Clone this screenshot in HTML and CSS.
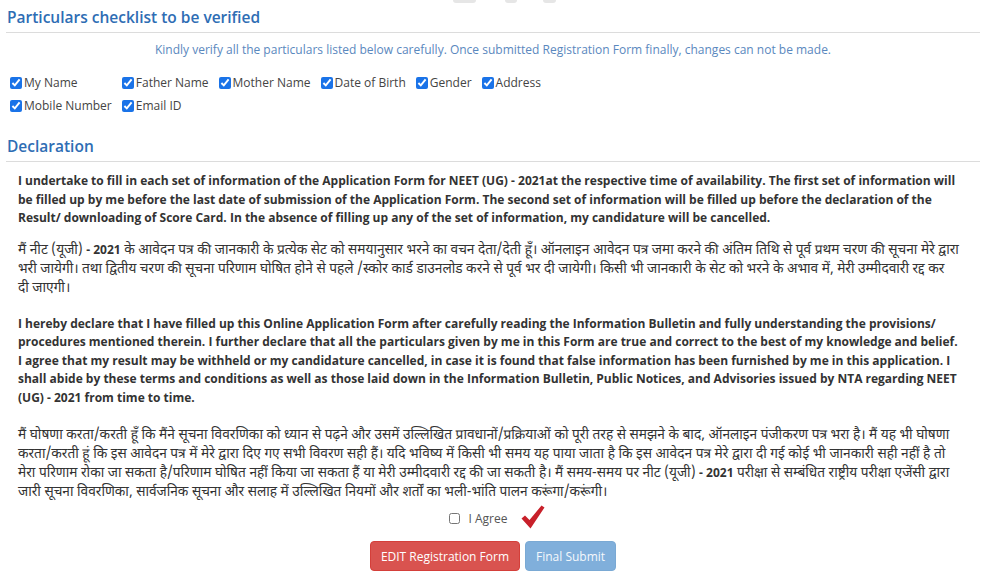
FILE: index.html
```html
<!DOCTYPE html>
<html lang="en">
<head>
<meta charset="utf-8">
<title>Particulars checklist</title>
<link rel="stylesheet" href="styles.css">
</head>
<body>
<div class="page">
  <div class="top-strip"><span class="blob b1"></span><span class="blob b2"></span><span class="blob b3"></span></div>
  <h2 class="section-title">Particulars checklist to be verified</h2>
  <p class="notice">Kindly verify all the particulars listed below carefully. Once submitted Registration Form finally, changes can not be made.</p>
  <div class="checklist">
    <label class="check"><input type="checkbox" checked>My Name</label>
    <label class="check"><input type="checkbox" checked>Father Name</label>
    <label class="check"><input type="checkbox" checked>Mother Name</label>
    <label class="check"><input type="checkbox" checked>Date of Birth</label>
    <label class="check"><input type="checkbox" checked>Gender</label>
    <label class="check"><input type="checkbox" checked>Address</label>
    <label class="check"><input type="checkbox" checked>Mobile Number</label>
    <label class="check"><input type="checkbox" checked>Email ID</label>
  </div>
  <h2 class="section-title decl-title">Declaration</h2>
  <div class="declaration">
    <p class="en p1">I undertake to fill in each set of information of the Application Form for NEET (UG) - 2021at the respective time of availability. The first set of information will be filled up by me before the last date of submission of the Application Form. The second set of information will be filled up before the declaration of the Result/ downloading of Score Card. In the absence of filling up any of the set of information, my candidature will be cancelled.</p>
    <p class="hi first">मैं नीट (यूजी) <b>- 2021</b> के आवेदन पत्र की जानकारी के प्रत्येक सेट को समयानुसार भरने का वचन देता/देती हूँ। ऑनलाइन आवेदन पत्र जमा करने की अंतिम तिथि से पूर्व प्रथम चरण की सूचना मेरे द्वारा भरी जायेगी। तथा द्वितीय चरण की सूचना परिणाम घोषित होने से पहले /स्कोर कार्ड डाउनलोड करने से पूर्व भर दी जायेगी। किसी भी जानकारी के सेट को भरने के अभाव में, मेरी उम्मीदवारी रद्द कर<br>दी जाएगी।</p>
    <p class="en">I hereby declare that I have filled up this Online Application Form after carefully reading the Information Bulletin and fully understanding the provisions/ procedures mentioned therein. I further declare that all the particulars given by me in this Form are true and correct to the best of my knowledge and belief. I agree that my result may be withheld or my candidature cancelled, in case it is found that false information has been furnished by me in this application. I shall abide by these terms and conditions as well as those laid down in the Information Bulletin, Public Notices, and Advisories issued by NTA regarding NEET (UG) - 2021 from time to time.</p>
    <p class="hi last">मैं घोषणा करता/करती हूँ कि मैंने सूचना विवरणिका को ध्यान से पढ़ने और उसमें उल्लिखित प्रावधानों/प्रक्रियाओं को पूरी तरह से समझने के बाद, ऑनलाइन पंजीकरण पत्र भरा है। मैं यह भी घोषणा करता/करती हूं कि इस आवेदन पत्र में मेरे द्वारा दिए गए सभी विवरण सही हैं। यदि भविष्य में किसी भी समय यह पाया जाता है कि इस आवेदन पत्र मेरे द्वारा दी गई कोई भी जानकारी सही नहीं है तो मेरा परिणाम रोका जा सकता है/परिणाम घोषित नहीं किया जा सकता हैं या मेरी उम्मीदवारी रद्द की जा सकती है। मैं समय-समय पर नीट (यूजी) <b>- 2021</b> परीक्षा से सम्बंधित राष्ट्रीय परीक्षा एजेंसी द्वारा जारी सूचना विवरणिका, सार्वजनिक सूचना और सलाह में उल्लिखित नियमों और शर्तों का भली-भांति पालन करूंगा/करूंगी।</p>
  </div>
  <div class="agree-row">
    <label class="agree"><input type="checkbox">I Agree</label>
    <svg class="tick" width="24" height="24" viewBox="0 0 24 24"><path d="M0.5 13.5 L4 10.5 L8.5 15 L20.5 0.5 L23.5 2.5 L9.5 23.5 Z" fill="#c8202a"/></svg>
  </div>
  <div class="actions">
    <button class="btn btn-edit" type="button">EDIT Registration Form</button>
    <button class="btn btn-submit" type="button">Final Submit</button>
  </div>
</div>
</body>
</html>
```

FILE: styles.css
```css
* { box-sizing: border-box; }
html, body { margin: 0; padding: 0; background: #fff; }
body {
  font-family: "Open Sans", "Noto Sans", sans-serif;
  color: #333;
}
.page {
  padding: 0 8px 0 6px;
  width: 988px;
}
.top-strip {
  display: flex;
  height: 3px;
  margin-bottom: -3px;
  padding-left: 447px;
}
.blob {
  height: 3px;
  background: #e6e6e6;
  border-radius: 0 0 4px 4px;
}
.b1 { width: 23px; }
.b2 { width: 12px; margin-left: 29px; }
.b3 { width: 13px; margin-left: 26px; }
.section-title {
  margin: 0;
  padding: 6px 0 4px 1px;
  font-size: 15.5px;
  line-height: 22px;
  font-weight: 600;
  color: #2e6db4;
  border-bottom: 1px solid #dcdcdc;
}
.notice {
  margin: 8px 0 0;
  text-align: center;
  font-size: 12px;
  line-height: 18px;
  color: #5a88be;
}
.checklist {
  margin-top: 12px;
  padding-left: 4px;
  display: grid;
  grid-template-columns: repeat(6, auto);
  justify-content: start;
  column-gap: 10px;
}
.check {
  display: flex;
  align-items: center;
  height: 23px;
  font-size: 12px;
  color: #444;
  white-space: nowrap;
}
.check input {
  margin: 0 2px 0 0;
  width: 12px;
  height: 12px;
  accent-color: #1a73e8;
}
.decl-title {
  margin-top: 18px;
  padding-top: 0;
}
.declaration {
  padding: 0 16px 0 12px;
  margin-top: 10px;
}
.declaration p {
  margin: 0 0 20px;
  font-size: 12px;
  line-height: 18.5px;
  color: #333;
}
.declaration .en { font-weight: 700; }
.declaration .p1 { margin-bottom: 14px; }
.declaration .hi {
  font-family: "Noto Sans Devanagari", "Noto Sans", "Lohit Devanagari", "Open Sans", sans-serif;
  font-size: 13.7px;
  line-height: 19px;
  font-weight: 400;
}
.declaration .first { margin-bottom: 16px; }
.declaration .hi b { font-family: "Open Sans", sans-serif; font-size: 12px; line-height: 1; }
.declaration .last { margin-bottom: 0; }
.agree-row {
  margin-top: 5px;
  display: flex;
  justify-content: center;
  align-items: center;
  height: 20px;
  padding-left: 8px;
}
.agree {
  display: flex;
  align-items: center;
  font-size: 12px;
  color: #555;
}
.agree input {
  margin: 0 9px 0 0;
  width: 11px;
  height: 11px;
}
.tick { margin-left: 14px; margin-top: -2px; }
.actions {
  margin-top: 13px;
  display: flex;
  justify-content: center;
  gap: 5px;
}
.btn {
  height: 30px;
  padding: 0 10px;
  border: 1px solid transparent;
  border-radius: 4px;
  font-family: "Open Sans", sans-serif;
  font-size: 12px;
  color: #fff;
  cursor: pointer;
}
.btn-edit { background: #d9534f; border-color: #d43f3a; }
.btn-submit { background: #80afdb; border-color: #7aa9d4; color: #f4f8fc; }
```
